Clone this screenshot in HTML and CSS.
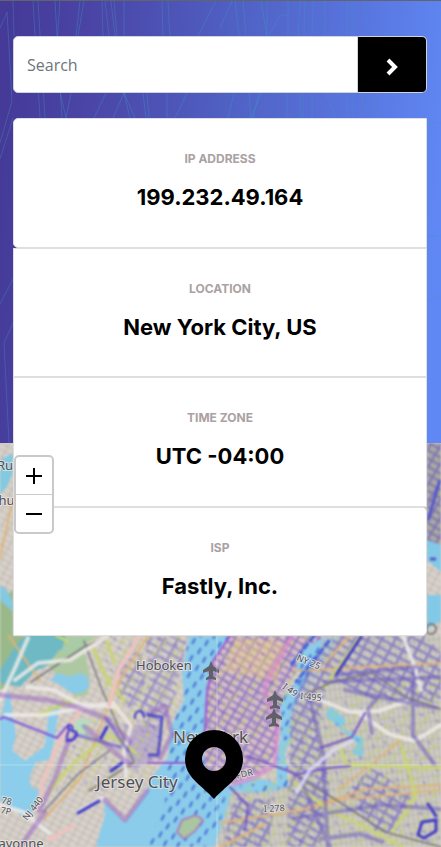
FILE: index.html
```html
<!DOCTYPE html>
<html lang="en">
<head>
<meta charset="utf-8">
<meta name="viewport" content="width=device-width, initial-scale=1">
<title>IP Address Tracker</title>
<link rel="stylesheet" href="styles.css">
</head>
<body>
<header class="hero">
  <svg class="hero-lines" viewBox="0 0 441 442" preserveAspectRatio="none" aria-hidden="true">
    <g fill="none" stroke="#4296c4" stroke-opacity=".36" stroke-width="1">
      <path d="M0 27L7 11L12 100L0 142M13 0L14 35M13 117L0 158M33 0L40 117M38 0L45 117M55 0L62 117M60 0L55 70L66 117L71 92M80 0L76 35M84 0L78 35M102 0L103 35M105 0L109 35M111 0L115 35M114 0L117 35M124 0V35M162 0L163 35M168 0L170 35M216 0L198 35M94 117L106 92M113 117L124 92L130 117M124 92L135 117M143 92L146 117M147 92L149 117M167 92V117M175 117L187 92"/>
      <path d="M232 0L220 27M235 0L239 35M243 0L246 35M261 0L267 35M267 0V35M269 35L280 14H288M288 0V35M300 0L298 35M305 0L304 35M313 0L312 35M325 0V35M347 0V35M352 0V35M365 0V20L378 35M228 117L234 92M249 92L251 117L261 92M253 117L259 92M287 92V117M300 92V117M303 92V117M312 92V117M326 92L335 117M347 92V117M353 92V117M362 92V114L369 104L376 117V92"/>
      <path d="M427 122H441M427 235H441M0 303L13 278M13 322L4 342L9 442M427 300L441 296"/>
    </g>
  </svg>
  <form class="search">
    <input class="search-input" type="text" aria-label="Search" placeholder="Search">
    <button class="search-button" type="button" aria-label="Look up address">
      <svg width="12" height="18" viewBox="0 0 12 18" aria-hidden="true"><path d="M2 2L9 9L2 16" fill="none" stroke="#fff" stroke-width="4"/></svg>
    </button>
  </form>
  <section class="cards">
    <article class="card"><h2 class="card-label">IP ADDRESS</h2><p class="card-value">199.232.49.164</p></article>
    <article class="card"><h2 class="card-label">LOCATION</h2><p class="card-value">New York City, US</p></article>
    <article class="card"><h2 class="card-label">TIME ZONE</h2><p class="card-value">UTC -04:00</p></article>
    <article class="card"><h2 class="card-label">ISP</h2><p class="card-value">Fastly, Inc.</p></article>
  </section>
</header>
<main class="map">
  <svg class="map-canvas" viewBox="0 443 441 404" preserveAspectRatio="xMidYMid slice" role="img" aria-label="Map of New York City">
    <defs>
      <pattern id="streets" width="8" height="6" patternUnits="userSpaceOnUse" patternTransform="rotate(28)"><path d="M0 0H8M0 0V6" stroke="#8e8c91" stroke-width="1.1" fill="none" opacity=".65"/></pattern>
      <pattern id="fine" width="5" height="9" patternUnits="userSpaceOnUse" patternTransform="rotate(-8)"><path d="M0 0H5M0 0V9" stroke="#77777d" stroke-width="1" fill="none" opacity=".5"/></pattern>
      <pattern id="avenues" width="9" height="7" patternUnits="userSpaceOnUse" patternTransform="rotate(30)"><path d="M0 1H9M1 0V7" stroke="#6457be" stroke-width="2.2" fill="none" opacity=".6"/></pattern>
      <pattern id="blocks" width="12" height="8" patternUnits="userSpaceOnUse" patternTransform="rotate(28)"><path d="M0 1H12M1 0V8" stroke="#6f63c4" stroke-width="3" fill="none" opacity=".65"/></pattern>
      <pattern id="specks" width="17" height="23" patternUnits="userSpaceOnUse" patternTransform="rotate(21)"><path d="M2 3h5M10 9v6M4 17l5 3" stroke="#bfcf64" stroke-width="2" opacity=".7"/><path d="M12 2l3 3M2 10l4 1" stroke="#4b42b7" stroke-width="1.5" opacity=".4"/></pattern>
      <pattern id="waves" width="13" height="17" patternUnits="userSpaceOnUse" patternTransform="rotate(8)"><path d="M3 2L1 8M9 10L7 16" stroke="#3558d0" stroke-width="1.8" fill="none"/></pattern>
      <clipPath id="brooklyn"><path d="M231 792L260 792L290 786V636H441V847H214L224 820Z"/></clipPath>
    </defs>
    <g class="terrain">
      <rect y="443" width="441" height="404" fill="#d8d1c9"/>
      <rect y="443" width="441" height="404" fill="url(#streets)"/>
      <path d="M0 600L13 590V636H42L28 661L20 680L0 690Z" fill="#9ab98b"/>
      <path d="M18 642L28 634L65 634L68 645L58 661L35 671L20 687L0 683V670Z" fill="#6fb9c4"/>
      <path d="M48 665L59 650L83 646L90 675L88 695L75 697L60 680Z" fill="#aec9a1"/>
      <path d="M66 636H96L80 650L60 656Z" fill="#a9cba5"/>
      <path d="M50 681C61 665 62 681 76 674C90 670 95 690 80 693C68 696 65 686 55 682Z" fill="#8acbe8"/>
      <path d="M75 718L90 720L87 736L72 730Z" fill="#b9dcc0"/>
      <path d="M0 460L13 453V472L7 487L0 494ZM0 585L7 590L13 602V612L0 600Z" fill="#83c9e0"/>
      <path d="M5 699L9 690L16 736L12 750L25 761L45 746L49 710L60 703L53 746L49 760L36 762L29 778L31 787L39 790L38 802L28 820L0 800V722Z" fill="#8bcdea"/>
      <path d="M189 636H230L214 660L207 690L205 735L207 790L232 785L256 778L277 783L276 755L281 738L281 700L302 675L294 665L302 650L325 636H342L306 691L295 711L294 731L285 754L289 788L270 795L235 791L224 820L214 847H96L99 835L105 816L104 801L125 823L147 791L150 779L168 757L171 726L184 700L182 673Z" fill="#8bccea"/>
      <path d="M187 636H230L213 662L204 694L202 746L208 787L227 787L220 825L206 847H147L165 803L166 775L171 730L184 695Z" fill="url(#waves)"/>
      <path d="M294 666L329 636H342L305 687L291 718L289 742L280 738L283 700ZM250 783L277 787L288 762V788L260 795Z" fill="url(#waves)"/>
      <path d="M177 832L182 820L196 815L203 820L195 831L184 839Z" fill="#aac6a0" stroke="#a883bc" stroke-width="2"/>
      <path d="M230 636H326L305 648L294 673L282 695L276 752L260 773L236 782L208 790L203 750L206 690L211 663Z" fill="#d8bdc5"/>
      <path d="M230 636H326L305 648L294 673L282 695L276 752L260 773L236 782L208 790L203 750L206 690L211 663Z" fill="url(#avenues)"/>
      <path d="M224 671L236 637L285 643L277 681Z" fill="#edc98c" opacity=".45"/>
      <g clip-path="url(#brooklyn)">
        <path d="M325 636H441V847H214L228 790L288 785V720Z" fill="#cbcabf" opacity=".75"/>
        <path d="M325 636H441V847H214L228 790L288 785V720Z" fill="url(#fine)"/>
        <path d="M310 660L337 636H425L441 653V703L370 699L328 675L318 730L291 770V710ZM346 793L371 768L413 794L391 831L379 835ZM290 715L318 735L330 782L320 847H287ZM235 798L275 800L268 847H222Z" fill="url(#blocks)"/>
        <path d="M331 707L346 720L342 728L364 739L362 758L352 753L357 743L325 715Z" fill="#83cbe5"/>
      </g>
      <path d="M120 669L139 648L147 671L141 700L129 708L119 692ZM146 637H187L180 675L169 712L148 735L139 705L149 680Z" fill="url(#blocks)" opacity=".8"/>
      <path d="M124 725H160L158 758L133 770L120 750Z" fill="#8d74cf" opacity=".35"/>
      <path d="M92 636H187L178 700L148 780L101 792L50 790L75 731L106 703Z" fill="url(#specks)"/>
      <path d="M290 715L440 670V847H219L230 795Z" fill="url(#specks)"/>
      <path d="M230 636H310L278 720L208 780V690Z" fill="url(#specks)"/>
      <g fill="none" stroke-linecap="round" stroke-linejoin="round">
        <path d="M9 636L40 681M12 503L0 558M148 636L121 679L108 707L80 779L45 818M294 671L440 663M338 789L370 766L403 738M294 812L340 800L440 790M220 823L305 809L365 789L440 785M220 847L265 824M350 635L325 663M112 705L134 727" stroke="#e0b478" stroke-width="2"/>
        <path d="M67 641L57 636M91 644L108 681L124 700M35 716L75 699M50 791L74 762L111 735L136 753M294 782L326 808L388 839L403 847M340 745L347 765L440 768M401 745L416 796L392 832M360 636L325 687M105 636L114 661" stroke="#c9d474" stroke-width="3"/>
        <path d="M31 682L84 647L111 636M43 812L78 774L109 751M102 690L134 762L89 791M84 641L102 690M297 776L341 803L385 832L441 847M303 696L332 682L372 673L408 698L441 709" stroke="#79767c" stroke-width="1.5"/>
        <path d="M0 700L15 668L28 638M15 680L38 663L70 660L108 636M5 715L44 715L81 708L113 703L131 726L124 751L126 776M27 687L54 690L80 704L113 707M0 805L23 812L49 833M403 636L415 668L421 690M320 700L350 712L379 711L407 701M359 713L389 734L414 741L441 725M78 812L103 798" stroke="#efebe9" stroke-opacity=".85" stroke-width="4"/>
        <path d="M140 636L119 670L109 705M80 711L57 746L43 781L38 811M49 840L73 826" stroke="#edc3c0" stroke-width="4"/>
        <path d="M0 695L48 700L80 708L105 718L130 741M39 811L55 778L69 740M149 714L165 706L172 735L160 758M105 800L125 820L147 791M20 847L45 812M85 727L130 765" stroke="#9462c2" stroke-opacity=".5" stroke-width="5"/>
        <path d="M0 719L4 717L57 738L66 727L76 733L72 741L66 741" stroke="#7c56dc" stroke-width="2"/>
        <path d="M77 735L120 747M106 718L128 751" stroke="#5a4fc9" stroke-opacity=".6" stroke-width="3"/>
        <path d="M69 728C64 724 75 723 72 731C81 730 77 742 67 740C65 736 69 734 69 728ZM135 718C134 710 143 708 144 717" stroke="#3934c8" stroke-width="2"/>
        <path d="M101 738L107 727M111 771L122 763M78 813L99 801" stroke="#3934c8" stroke-width="3"/>
        <path d="M148 715L162 717L160 740L158 755H149" stroke="#3934c8" stroke-opacity=".8" stroke-width="3"/>
        <path d="M230 636L213 661L207 694L204 744M148 763H187" stroke="#9a55d1" stroke-width="2"/>
        <path d="M292 636L264 687L277 728L275 765L253 778L235 784" stroke="#d87dd3" stroke-width="5" opacity=".55"/>
        <path d="M247 756L294 773M230 787L248 806L245 830M294 775L329 768L350 766M320 748L352 737L365 713" stroke="#7555c6" stroke-width="2"/>
        <path d="M361 637L336 675M428 804L436 816M418 835L422 822L436 820L436 831L424 838Z" stroke="#403bc5" stroke-width="3"/>
        <path d="M329 641L296 682M314 636L291 665" stroke="#3f60da" stroke-width="3" stroke-dasharray="6 4"/>
        <path d="M300 779L330 847M323 759L328 847M294 818L382 805L440 809M379 696L368 709L372 733M413 670V735L434 764M310 700L325 760M321 839L360 834L382 842M325 682L440 677M337 675L415 667M345 690L436 708" stroke="#6354bd" stroke-opacity=".5" stroke-width="4"/>
        <path d="M297 792L310 770L335 749L352 741" stroke="#dedcf8" stroke-opacity=".8" stroke-width="4"/>
      </g>
      <path d="M427 443H441V545L431 541L427 550Z" fill="#a8a8a1"/>
      <path d="M427 443H441V545H427Z" fill="url(#avenues)"/>
      <path d="M427 540L441 545V572L427 560ZM427 595H441V621L427 629Z" fill="#82c9e7"/>
      <path d="M440 480L428 520M430 559H436" stroke="#5557c8" stroke-width="3"/>
      <circle cx="431" cy="629" r="5" fill="none" stroke="#777" stroke-width="2"/>
    </g>
    <g fill="#5f6068">
      <path id="plane" d="M211 661L213 666L219 670V673L213 671V676L216 678V680L211 679L206 680V678L209 676V671L203 673V670L209 666Z"/>
      <use href="#plane" x="64" y="29"/><use href="#plane" x="63" y="47"/>
    </g>
    <path d="M0 765H441M217 636V847" stroke="#fff" stroke-width="1" opacity=".3"/>
    <g class="places">
      <text class="town" x="136" y="670">Hoboken</text>
      <text class="city" x="173" y="743">New York</text>
      <text class="city" x="96" y="788">Jersey City</text>
      <text class="town" x="-10" y="848">Bayonne</text>
      <text class="town" x="-3" y="470">Rutherford</text>
      <text class="town" x="-31" y="505">Lyndhurst</text>
      <g class="road"><text transform="translate(300 699) rotate(5)">I-495</text><text transform="translate(296 660) rotate(23)">NY 25</text><text transform="translate(264 812) rotate(-3)">I 278</text><text transform="translate(27 821) rotate(-52)">NJ 440</text><text transform="translate(1 803) rotate(12)">78</text><text transform="translate(0 813) rotate(12)">7P</text><text transform="translate(237 779) rotate(-14)">FDR</text><text transform="translate(282 688) rotate(35)">I 49</text></g>
    </g>
    <path d="M214 730A29 29 0 0 0 185 759C185 778 203 786 214 799C225 786 243 778 243 759A29 29 0 0 0 214 730ZM214 747A12 12 0 1 1 214 771A12 12 0 1 1 214 747Z" fill="#000" fill-rule="evenodd"/>
  </svg>
  <div class="zoom">
    <button class="zoom-button" type="button" aria-label="Zoom in"><svg width="18" height="18" viewBox="0 0 18 18" aria-hidden="true"><path d="M1 9H17M9 1V17" stroke="#000" stroke-width="2"/></svg></button>
    <button class="zoom-button" type="button" aria-label="Zoom out"><svg width="18" height="18" viewBox="0 0 18 18" aria-hidden="true"><path d="M1 9H17" stroke="#000" stroke-width="2"/></svg></button>
  </div>
</main>
</body>
</html>
```
FILE: styles.css
```css
* { box-sizing: border-box; }

body {
  margin: 0;
  min-height: 100vh;
  display: flex;
  flex-direction: column;
  font-family: Inter, Roboto, sans-serif;
  border-top: 1px solid #62636b;
}

.hero {
  position: relative;
  z-index: 1;
  padding: 35px 14px 0 13px;
  background: linear-gradient(95deg, #453a98 3%, #4a45a6 20%, #5061c4 50%, #5977e1 78%, #6088f4 96%);
}

.hero-lines {
  position: absolute;
  inset: 0;
  width: 100%;
  height: 100%;
}

.search {
  position: relative;
  display: flex;
  height: 57px;
  margin-bottom: 25px;
}

.search-input {
  flex: 1;
  min-width: 0;
  padding: 0 13px;
  border: 1px solid #ced4da;
  border-radius: 5px 0 0 5px;
  background: #fff;
  font: 400 16px "Open Sans", "Noto Sans", sans-serif;
}

.search-input::placeholder { color: #6c757d; opacity: 1; }

.search-button {
  display: grid;
  place-items: center;
  width: 69px;
  padding: 4px 0 0;
  border: 1px solid #ced4da;
  border-left: 0;
  border-radius: 0 5px 5px 0;
  background: #000;
}

.cards {
  position: relative;
  display: grid;
  grid-auto-rows: 1fr;
  min-height: 518px;
  margin-bottom: -193px;
}

.card {
  display: flex;
  flex-direction: column;
  align-items: center;
  gap: 10px;
  padding: 30px 12px;
  border: 1px solid #dfdfdf;
  background: #fff;
}

.card:first-child { border-radius: 5px 0 0 5px; }
.card:last-child { border-radius: 0 5px 5px 0; }

.card-label {
  margin: 0;
  color: #aaa1a1;
  font-size: 12px;
  font-weight: 700;
  line-height: 20px;
}

.card-value {
  margin: 0;
  color: #000;
  font-size: 22px;
  font-weight: 700;
  line-height: 36px;
}

.map {
  position: relative;
  flex: 1;
  min-height: 404px;
  background: #d8d1c9;
}

.map-canvas {
  position: absolute;
  inset: 0;
  width: 100%;
  height: 100%;
}

.terrain { filter: blur(1px); }

.places {
  fill: #505056;
  stroke: #eeeae8;
  stroke-width: 2px;
  stroke-opacity: .7;
  paint-order: stroke;
  font-family: "Noto Sans", "Open Sans", sans-serif;
}

.town { font-size: 13px; }
.city { font-size: 17px; }
.road { font-size: 9px; }

.zoom {
  position: absolute;
  z-index: 2;
  top: 12px;
  left: 14px;
  width: 40px;
  border: 2px solid #c9c9c9;
  border-radius: 5px;
  background: #fff;
}

.zoom-button {
  display: grid;
  place-items: center;
  width: 100%;
  height: 37px;
  padding: 0;
  border: 0;
  background: transparent;
}

.zoom-button:first-child { height: 38px; border-bottom: 1px solid #ccc; }
```
